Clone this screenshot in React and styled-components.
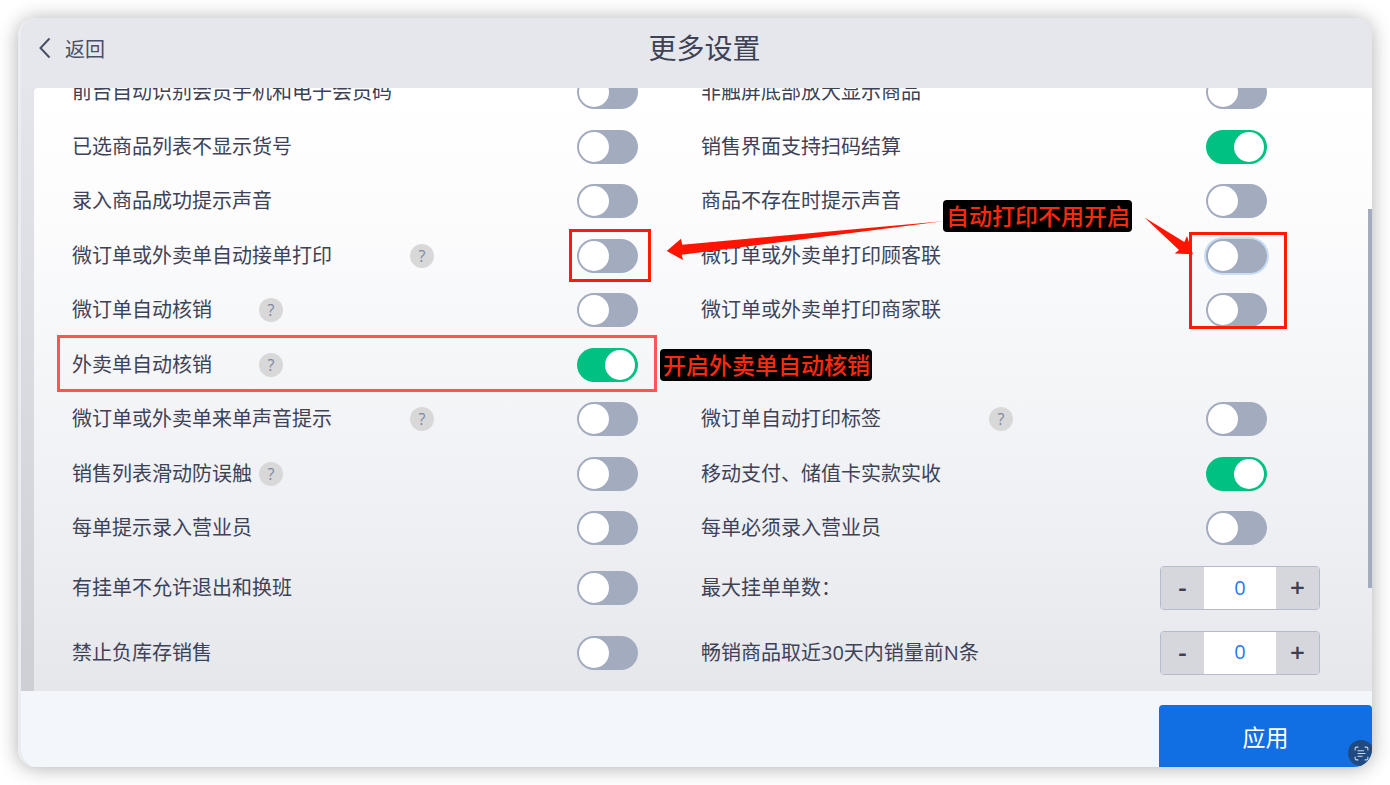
import { useState } from "react";
import styled, { createGlobalStyle, css } from "styled-components";
import { ScanText } from "lucide-react";

const GlobalStyle = createGlobalStyle`
  * {
    box-sizing: border-box;
  }
  body {
    margin: 0;
    background: #fff;
    color: #3d4257;
    font-family: "Open Sans", "Noto Sans CJK SC", "Noto Sans", sans-serif;
    font-size: 20px;
  }
  button,
  input {
    font-family: inherit;
    color: inherit;
  }
`;

const Page = styled.div`
  display: flex;
  min-height: 100vh;
  padding: 18px;
`;

const Window = styled.main`
  position: relative;
  flex: 1;
  display: flex;
  flex-direction: column;
  overflow: hidden;
  border-left: 3px solid #ebecef;
  border-radius: 18px;
  background: linear-gradient(180deg, #e7e8ed 0%, #e4e5eb 12%, #cdcfd5 90%);
`;

const Shadow = styled.div`
  flex: 1;
  display: flex;
  min-width: 0;
  border-radius: 18px;
  box-shadow: 0 1px 20px rgba(0, 0, 0, 0.32);
`;

const Header = styled.header`
  display: grid;
  grid-template-columns: 1fr auto 1fr;
  align-items: center;
  height: 70px;
  padding: 0 0 10px 16px;
  background: #e6e7ec;
`;

const BackButton = styled.button`
  display: flex;
  align-items: center;
  gap: 14px;
  justify-self: start;
  padding: 0;
  border: none;
  background: none;
  font-size: 20px;
  color: #4b4f64;
  cursor: pointer;
`;

const Title = styled.h1`
  margin: 0;
  font-size: 28px;
  font-weight: 400;
  line-height: 40px;
`;

const Panel = styled.section`
  position: relative;
  flex: 1;
  display: flex;
  flex-direction: column;
  overflow: hidden;
  margin-left: 13px;
  padding: 0 42px 6px 38px;
  border-top-left-radius: 4px;
  background: linear-gradient(180deg, #fff 0%, #fcfcfd 20%, #f6f7f9 42%, #eeeff3 75%, #e6e7eb 100%);
`;

/* the list is scrolled a little, so its first row is cut by the panel edge */
const SettingsGrid = styled.div`
  flex: 1;
  display: grid;
  grid-template-columns: 1fr 1fr;
  grid-template-rows: repeat(9, minmax(54px, 54fr)) repeat(2, minmax(64px, 64fr));
  margin-top: -23px;
`;

const Field = styled.div`
  position: relative;
  display: flex;
  align-items: center;
  padding-right: ${({ $wide }) => ($wide ? "10px" : "63px")};
`;

const FieldLabel = styled.label`
  min-width: ${({ $width }) => ($width ? `${$width}px` : "0")};
  line-height: 30px;
  white-space: nowrap;
`;

const HelpButton = styled.button`
  width: 24px;
  height: 24px;
  padding: 0;
  border: none;
  border-radius: 50%;
  background: #d8d8d9;
  color: #7d879f;
  font-size: 16px;
  line-height: 24px;
  cursor: pointer;
`;

const Control = styled.div`
  position: relative;
  display: flex;
  margin-left: auto;
`;

const Switch = styled.input`
  appearance: none;
  width: 61px;
  height: 34px;
  margin: 0;
  padding: 2px;
  border-radius: 17px;
  background: #a3abbe;
  cursor: pointer;
  ${({ $halo }) =>
    $halo &&
    css`
      box-shadow: 0 0 0 2px #c9def5;
    `}
  &::before {
    content: "";
    display: block;
    width: 30px;
    height: 30px;
    border-radius: 50%;
    background: #fff;
  }
  &:checked {
    background: #00c181;
  }
  &:checked::before {
    margin-left: 26px;
  }
`;

const StepperBox = styled.div`
  display: flex;
  width: 160px;
  height: 44px;
  overflow: hidden;
  border: 1px solid #b4bbce;
  border-radius: 4px;
`;

const StepButton = styled.button`
  width: 43px;
  padding: 0 0 2px;
  border: none;
  background: #d6d7dc;
  color: #3d4055;
  font-size: 26px;
  font-weight: 600;
  line-height: 40px;
  cursor: pointer;
`;

const StepInput = styled.input`
  flex: 1;
  min-width: 0;
  padding: 0 0 2px;
  border: none;
  outline: none;
  background: #fff;
  color: #2b79e6;
  font-size: 20px;
  text-align: center;
`;

const ScrollThumb = styled.div`
  position: absolute;
  top: 20%;
  right: 0;
  width: 4px;
  height: 63%;
  background: #a3abbe;
`;

const Footer = styled.footer`
  display: flex;
  justify-content: flex-end;
  padding-top: 14px;
  background: #f3f6fb;
`;

const ApplyButton = styled.button`
  width: 213px;
  height: 62px;
  padding: 0;
  border: none;
  border-radius: 4px 4px 0 0;
  background: #126ee3;
  color: #fff;
  font-size: 23px;
  cursor: pointer;
`;

const ScanButton = styled.button`
  position: absolute;
  right: -2px;
  bottom: 1px;
  display: flex;
  align-items: center;
  justify-content: center;
  width: 26px;
  height: 26px;
  padding: 0;
  border: none;
  border-radius: 50%;
  background: #204a80;
  color: #cfd9e4;
`;

const Outline = styled.span`
  position: absolute;
  z-index: 1;
  pointer-events: none;
  ${({ $kind }) =>
    ({
      toggle: css`
        inset: -10px -13px -9px -8px;
        border: 3px solid #ff1a08;
      `,
      pair: css`
        top: -7px;
        left: -17px;
        right: -20px;
        height: 97px;
        border: 3px solid #ff1a08;
      `,
      row: css`
        inset: -3px 44px 0 -15px;
        border: 3px solid #ff5454;
      `,
    })[$kind]}
`;

const Callout = styled.strong`
  position: absolute;
  z-index: 2;
  top: ${({ $top }) => $top}px;
  left: ${({ $left }) => $left}px;
  padding: 0 2px 2px 3px;
  border-radius: 4px;
  background: #000;
  color: #ff2a0c;
  font-family: "Noto Sans CJK SC", sans-serif;
  font-size: 23px;
  font-weight: 500;
  line-height: 30px;
  white-space: nowrap;
`;

const Arrow = styled.svg`
  position: absolute;
  z-index: 2;
  top: ${({ $top }) => $top}px;
  left: ${({ $left }) => $left}px;
  fill: #ff1400;
  pointer-events: none;
`;

const settings = [
  { id: "memberCode", label: "前台自动识别会员手机和电子会员码" },
  { id: "bigDisplay", label: "非触屏底部放大显示商品" },
  { id: "hideNo", label: "已选商品列表不显示货号" },
  { id: "scanPay", label: "销售界面支持扫码结算", on: true },
  { id: "addSound", label: "录入商品成功提示声音" },
  { id: "missingSound", label: "商品不存在时提示声音" },
  { id: "autoAccept", label: "微订单或外卖单自动接单打印", help: 338, outline: "toggle" },
  { id: "printCustomer", label: "微订单或外卖单打印顾客联", outline: "pair", halo: true, note: "print" },
  { id: "microVerify", label: "微订单自动核销", help: 187 },
  { id: "printShop", label: "微订单或外卖单打印商家联" },
  { id: "takeoutVerify", label: "外卖单自动核销", help: 187, on: true, note: "verify" },
  null,
  { id: "orderSound", label: "微订单或外卖单来单声音提示", help: 338 },
  { id: "printTag", label: "微订单自动打印标签", help: 288 },
  { id: "slideGuard", label: "销售列表滑动防误触", help: 187 },
  { id: "realPay", label: "移动支付、储值卡实款实收", on: true },
  { id: "askClerk", label: "每单提示录入营业员" },
  { id: "needClerk", label: "每单必须录入营业员" },
  { id: "holdExit", label: "有挂单不允许退出和换班" },
  { id: "maxHold", label: "最大挂单单数：", number: true },
  { id: "noNegative", label: "禁止负库存销售" },
  { id: "topN", label: "畅销商品取近30天内销量前N条", number: true },
];

function Stepper({ id }) {
  const [value, setValue] = useState(0);
  return (
    <StepperBox>
      <StepButton type="button" onClick={() => setValue(Math.max(0, value - 1))}>
        -
      </StepButton>
      <StepInput
        id={id}
        inputMode="numeric"
        value={value}
        onChange={(e) => setValue(Number(e.target.value) || 0)}
      />
      <StepButton type="button" onClick={() => setValue(value + 1)}>
        +
      </StepButton>
    </StepperBox>
  );
}

function Note({ kind }) {
  if (kind === "print") {
    return (
      <>
        <Arrow $top={8} $left={-35} width="278" height="40" viewBox="666 236 278 40" overflow="visible">
          <path d="M666.7 250 681 237.7 682.3 243.7 943 220.3 681.7 253.8 683 259Z" />
        </Arrow>
        <Callout $top={-29} $left={242}>
          自动打印不用开启
        </Callout>
      </>
    );
  }
  return (
    <>
      <Outline $kind="row" />
      <Callout $top={11} $left={588}>
        开启外卖单自动核销
      </Callout>
    </>
  );
}

function Setting({ item }) {
  return (
    <Field $wide={item.number}>
      <FieldLabel htmlFor={item.id} $width={item.help}>
        {item.label}
      </FieldLabel>
      {item.help && <HelpButton type="button">?</HelpButton>}
      <Control>
        {item.number ? (
          <Stepper id={item.id} />
        ) : (
          <Switch id={item.id} type="checkbox" defaultChecked={item.on} $halo={item.halo} />
        )}
        {item.outline && <Outline $kind={item.outline} />}
        {item.outline === "pair" && (
          <Arrow $top={-22} $left={-62} width="50" height="38" viewBox="1144 217 50 38">
            <path d="M1144.5 217.5 1184.3 242 1187 236 1193 254.3 1174.7 253.6 1179 250Z" />
          </Arrow>
        )}
      </Control>
      {item.note && <Note kind={item.note} />}
    </Field>
  );
}

export default function App() {
  return (
    <Page lang="zh-CN">
      <GlobalStyle />
      <Shadow>
        <Window>
          <Header>
            <BackButton type="button">
              <svg width="14" height="22" viewBox="0 0 14 22" fill="none" stroke="currentColor" strokeWidth="2">
                <path d="M12.5 1.5 3.5 11l9 9.5" />
              </svg>
              返回
            </BackButton>
            <Title>更多设置</Title>
          </Header>
          <Panel>
            <SettingsGrid>
              {settings.map((item, i) => (item ? <Setting key={item.id} item={item} /> : <div key={i} />))}
            </SettingsGrid>
            <ScrollThumb />
          </Panel>
          <Footer>
            <ApplyButton type="button">应用</ApplyButton>
          </Footer>
          <ScanButton type="button" aria-label="识别文字">
            <ScanText size={17} strokeWidth={1.5} />
          </ScanButton>
        </Window>
      </Shadow>
    </Page>
  );
}
